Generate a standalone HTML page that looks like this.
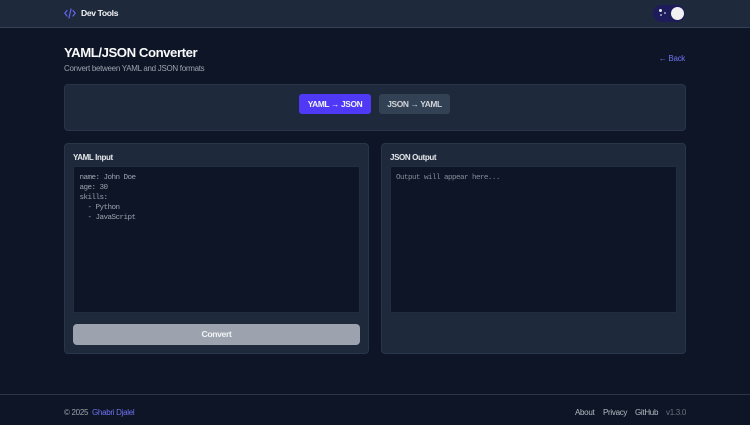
<!DOCTYPE html>
<html><head><meta charset="utf-8"><style>
*{box-sizing:border-box;margin:0;padding:0}
html,body{width:750px;height:425px;overflow:hidden;background:#0d1526;font-family:"Liberation Sans",sans-serif}
div,a,svg{position:absolute}
.t{white-space:nowrap}
.panel{background:#1e293b;border:1px solid #293649;border-radius:4px}
.ta{background:#0d1526;border:1px solid #212d42;border-radius:2px}
.m{font-family:"Liberation Mono",monospace;font-size:7.600px;letter-spacing:-.56px;line-height:10px;color:#9ca3af;white-space:pre}
.f{top:407px;font-size:8px;letter-spacing:-.3px;line-height:11px;color:#b4bac4}
.l{font-size:8px;letter-spacing:-.37px;line-height:10px;font-weight:700;color:#e5e7eb;top:152.500px}
.b{top:94px;text-align:center;font-size:8.400px;letter-spacing:-.37px;line-height:20px;font-weight:700}
</style></head><body>
<div style="left:0;top:0;width:750px;height:28px;background:#1e293b;border-bottom:1px solid #334155"></div>
<svg style="left:64px;top:8px" width="12" height="11" viewBox="0 0 12 11" fill="none" stroke="#6366f1" stroke-width="1.200" stroke-linecap="round" stroke-linejoin="round"><path d="M3 2.500L.8 5.300 3 8M9 2.500l2.200 2.800L9 8M7 1L5 10"/></svg>
<div class="t" style="left:81px;top:8px;font-size:8.600px;letter-spacing:-.37px;line-height:11px;font-weight:700;color:#f3f4f6">Dev Tools</div>

<div style="left:653px;top:5px;width:32px;height:17px;border-radius:9px;background:#1e1b5a"></div>
<div style="left:671px;top:6.500px;width:13px;height:13px;border-radius:50%;background:#f1f1f4"></div>
<div style="left:658.500px;top:8.500px;width:3px;height:3px;border-radius:50%;background:#e5e7eb"></div>
<div style="left:664px;top:12px;width:2px;height:2px;border-radius:50%;background:#a5a8c8"></div>
<div style="left:660px;top:14px;width:2px;height:2px;border-radius:50%;background:#a5a8c8"></div>

<div class="t" style="left:64px;top:45px;font-size:13.200px;letter-spacing:-.45px;line-height:16px;font-weight:700;color:#f9fafb">YAML/JSON Converter</div>
<div class="t" style="left:64px;top:63.500px;font-size:8px;letter-spacing:-.3px;line-height:10px;color:#9ca3af">Convert between YAML and JSON formats</div>
<div class="t" style="left:625px;width:60px;text-align:right;top:53px;font-size:8px;letter-spacing:-.3px;line-height:11px;color:#6f72f0">← Back</div>

<div class="panel" style="left:64px;top:84px;width:622px;height:47px"></div>
<div style="left:299px;top:94px;width:72px;height:20px;border-radius:3px;background:#4f39f6"></div>
<div class="t b" style="left:299px;width:72px;color:#f3f4f6">YAML → JSON</div>
<div style="left:379px;top:94px;width:71px;height:20px;border-radius:3px;background:#334155"></div>
<div class="t b" style="left:379px;width:71px;color:#d1d5db">JSON → YAML</div>

<div class="panel" style="left:64px;top:143px;width:305px;height:211px"></div>
<div class="t l" style="left:73px">YAML Input</div>
<div class="ta" style="left:73px;top:166px;width:287px;height:147px"></div>
<div class="m" style="left:79.500px;top:173px">name: John Doe
age: 30
skills:
  - Python
  - JavaScript</div>
<div style="left:73px;top:324px;width:287px;height:21px;border-radius:4px;background:#9ca3af"></div>
<div class="t" style="left:73px;top:324px;width:287px;text-align:center;font-size:8.600px;letter-spacing:-.37px;line-height:21px;font-weight:700;color:#f3f4f6">Convert</div>

<div class="panel" style="left:381px;top:143px;width:305px;height:211px"></div>
<div class="t l" style="left:390px">JSON Output</div>
<div class="ta" style="left:390px;top:166px;width:287px;height:147px"></div>
<div class="m" style="left:396px;top:173px;color:#858c98">Output will appear here...</div>

<div style="left:0;top:394px;width:750px;height:1px;background:#2a3548"></div>
<div class="t f" style="left:64px;color:#9ca3af">© 2025</div>
<div class="t f" style="left:92px;color:#6f72f0">Ghabri Djalel</div>
<div class="t f" style="left:575px">About</div>
<div class="t f" style="left:603px">Privacy</div>
<div class="t f" style="left:635px">GitHub</div>
<div class="t f" style="left:666px;color:#6b7280">v1.3.0</div>
</body></html>
